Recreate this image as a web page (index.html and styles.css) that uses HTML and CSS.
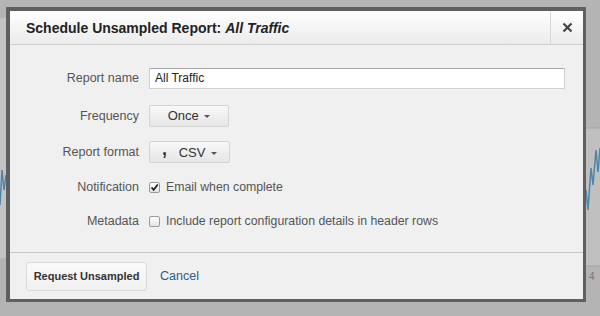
FILE: index.html
```html
<!DOCTYPE html>
<html lang="en">
<head>
    <meta charset="UTF-8">
    <meta name="viewport" content="width=device-width, initial-scale=1.0">
    <title>Schedule Unsampled Report</title>
    <link rel="stylesheet" href="styles.css">
</head>
<body>
    <!-- bits of the report page peeking out behind the modal -->
    <svg class="backdrop-chart" width="600" height="316" viewBox="0 0 600 316">
        <rect x="0" y="18" width="6" height="240" fill="#c3c3c3"/>
        <rect x="586" y="128" width="14" height="138" fill="#c0c0c0"/>
        <line x1="586" y1="128" x2="600" y2="128" stroke="#a5a5a5"/>
        <line x1="586" y1="266" x2="600" y2="266" stroke="#a5a5a5"/>
        <polyline points="0,205 2,170 4,190 6,175" stroke="#4f86a8" stroke-width="1.5" fill="none"/>
        <polyline points="586,190 588,210 591,168 593,185 596,150 598,172 600,148" stroke="#4f86a8" stroke-width="1.5" fill="none"/>
        <text x="589" y="280" font-size="10" font-family="Arial, sans-serif" fill="#777">4</text>
    </svg>
    <div class="dialog">
        <div class="dialog-header">
            <h1 class="dialog-title">Schedule Unsampled Report: <em>All Traffic</em></h1>
            <button class="close-button" aria-label="Close">
                <svg width="11" height="11" viewBox="0 0 11 11">
                    <path d="M1.5 1.5 L9.5 9.5 M9.5 1.5 L1.5 9.5" stroke="#444" stroke-width="2.2" fill="none"/>
                </svg>
            </button>
        </div>
        <div class="dialog-body">
            <div class="form-row">
                <label class="form-label">Report name</label>
                <input class="text-input" type="text" value="All Traffic">
            </div>
            <div class="form-row">
                <label class="form-label">Frequency</label>
                <button class="menu-button freq-button">Once <span class="caret"></span></button>
            </div>
            <div class="form-row">
                <label class="form-label">Report format</label>
                <button class="menu-button format-button"><span class="comma">,</span> CSV <span class="caret"></span></button>
            </div>
            <div class="form-row">
                <label class="form-label">Notification</label>
                <span class="check-line">
                    <span class="checkbox">
                        <svg width="9" height="9" viewBox="0 0 9 9">
                            <path d="M1.5 4.5 L3.6 6.8 L7.8 1.5" stroke="#222" stroke-width="1.8" fill="none"/>
                        </svg>
                    </span>
                    Email when complete
                </span>
            </div>
            <div class="form-row">
                <label class="form-label">Metadata</label>
                <span class="check-line">
                    <span class="checkbox"></span>
                    Include report configuration details in header rows
                </span>
            </div>
        </div>
        <div class="dialog-footer">
            <button class="primary-button">Request Unsampled</button>
            <a class="cancel-link" href="#">Cancel</a>
        </div>
    </div>
</body>
</html>
```

FILE: styles.css
```css
body {
    margin: 0;
    background-color: #b4b4b4;
    font-family: Arial, "Liberation Sans", sans-serif;
    color: #555;
    overflow: hidden;
    position: relative;
}
.backdrop-chart {
    position: absolute;
    left: 0;
    top: 0;
}
.dialog {
    position: relative;
    width: 573px;
    margin: 7px 0 0 6px;
    border: 4px solid #5f5f5f;
    border-right-width: 3px;
    border-bottom-width: 3px;
    background-color: #f0f0f0;
}
.dialog-header {
    display: flex;
    height: 33px;
    border-bottom: 1px solid #cfcfcf;
    background-image: linear-gradient(#ffffff, #ebebeb);
}
.dialog-title {
    flex: 1;
    margin: 0;
    padding-left: 16px;
    font-size: 14px;
    line-height: 35px;
    color: #222;
}
.dialog-title em {
    font-style: italic;
}
.close-button {
    width: 33px;
    border: none;
    border-left: 1px solid #d6d6d6;
    background: none;
    padding: 0;
    display: flex;
    align-items: center;
    justify-content: center;
}
.dialog-body {
    display: grid;
    grid-template-columns: 129px 1fr;
    grid-template-rows: 38px 37px 36px 34px 34px;
    column-gap: 10px;
    padding: 14px 0 14px;
}
.form-row {
    display: contents;
}
.form-label {
    align-self: center;
    text-align: right;
    font-size: 12.5px;
}
.text-input {
    align-self: center;
    width: 416px;
    height: 21px;
    box-sizing: border-box;
    border: 1px solid #d0d0d0;
    border-top-color: #a9a9a9;
    padding: 0 5px;
    font-family: inherit;
    font-size: 12px;
    color: #222;
    background-color: #fff;
}
.menu-button {
    align-self: center;
    justify-self: start;
    height: 22px;
    padding: 0;
    border: 1px solid #d4d4d4;
    border-radius: 2px;
    background-image: linear-gradient(#f8f8f8, #e6e6e6);
    font-family: inherit;
    font-size: 13px;
    color: #333;
}
.freq-button {
    width: 80px;
}
.format-button {
    width: 81px;
}
.comma {
    font-weight: bold;
    font-size: 18px;
    line-height: 10px;
    margin-right: 8px;
    position: relative;
    top: -2px;
}
.caret {
    display: inline-block;
    margin-left: 2px;
    vertical-align: middle;
    border-left: 3px solid transparent;
    border-right: 3px solid transparent;
    border-top: 3px solid #555;
}
.check-line {
    align-self: center;
    display: flex;
    align-items: center;
    gap: 6px;
    font-size: 12.3px;
    color: #555;
}
.checkbox {
    width: 9px;
    height: 9px;
    border: 1px solid #9a9a9a;
    border-radius: 2px;
    background-image: linear-gradient(#fff, #e4e4e4);
    display: flex;
    align-items: center;
    justify-content: center;
}
.dialog-footer {
    display: flex;
    align-items: center;
    gap: 13px;
    height: 46px;
    padding: 0 16px;
    border-top: 1px solid #c6c6c6;
}
.primary-button {
    width: 121px;
    height: 29px;
    padding: 0;
    border: 1px solid #dadada;
    border-radius: 3px;
    background-image: linear-gradient(#fafafa, #f0f0f0);
    font-family: inherit;
    font-size: 11px;
    font-weight: bold;
    color: #333;
}
.cancel-link {
    font-size: 12.5px;
    color: #2b5e86;
    text-decoration: none;
}
```
